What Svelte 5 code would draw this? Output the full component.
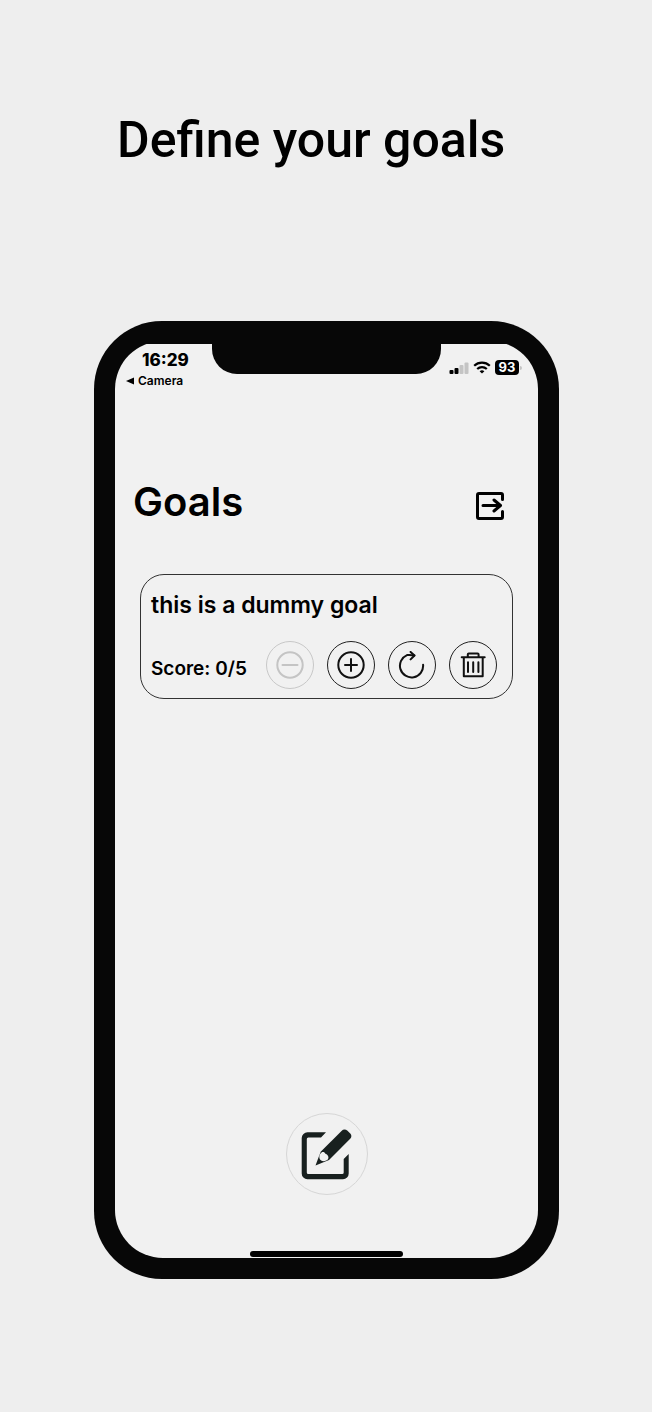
<script>
  const goals = $state([{ id: 1, title: 'this is a dummy goal', score: 0, target: 5 }]);

  function change(goal, step) {
    goal.score = Math.max(0, Math.min(goal.target, goal.score + step));
  }

  function remove(goal) {
    goals.splice(goals.indexOf(goal), 1);
  }
</script>

<main>
  <h1>Define your goals</h1>

  <section class="phone">
    <div class="screen">
      <div class="notch"></div>
      <header class="status">
        <div class="left">
          <time>16:29</time>
          <a href="#camera">
            <svg width="8" height="8" viewBox="0 0 8 8"><path d="M8 0.5v7L0 4z" /></svg>
            <span>Camera</span>
          </a>
        </div>
        <div class="right">
          <svg width="20" height="12" viewBox="0 0 20 12">
            <rect x="0.5" y="8" width="4" height="4" rx="1" />
            <rect x="5.5" y="6" width="4" height="6" rx="1" />
            <rect class="dim" x="10.5" y="3" width="4" height="9" rx="1" />
            <rect class="dim" x="15.5" y="0.5" width="4" height="11.5" rx="1" />
          </svg>
          <svg width="18" height="13" viewBox="0 0 18 13" fill="none" stroke="#000" stroke-width="2.2">
            <path d="M1.2 4.8a11.2 11.2 0 0 1 15.6 0M4.2 8a7 7 0 0 1 9.6 0" />
            <path d="M9 12.4 6.6 10.2a3.6 3.6 0 0 1 4.8 0z" fill="#000" stroke="none" />
          </svg>
          <span class="battery">93</span>
          <span class="cap"></span>
        </div>
      </header>

      <div class="title">
        <h2>Goals</h2>
        <button class="plain" aria-label="Log out">
          <svg width="30" height="30" viewBox="0 0 30 30" fill="none" stroke="#000" stroke-width="3" stroke-linejoin="round" stroke-linecap="round">
            <path d="M27.5 8.500V4a1.500 1.500 0 0 0-1.500-1.500H4A1.500 1.500 0 0 0 2.500 4v22A1.500 1.500 0 0 0 4 27.500h22a1.500 1.500 0 0 0 1.500-1.500v-5.500" />
            <path d="M8 14.500h17M19 9l6.500 5.500L19 20" />
          </svg>
        </button>
      </div>

      <ul>
        {#each goals as goal (goal.id)}
          <li>
            <h3>{goal.title}</h3>
            <div class="row">
              <p>Score: {goal.score}/{goal.target}</p>
              <button class="round" aria-label="Decrease score" disabled={goal.score === 0} onclick={() => change(goal, -1)}>
                <svg width="28" height="28" viewBox="0 0 28 28">
                  <circle cx="14" cy="14" r="12.700" />
                  <path d="M6.500 14h15" />
                </svg>
              </button>
              <button class="round" aria-label="Increase score" onclick={() => change(goal, 1)}>
                <svg width="28" height="28" viewBox="0 0 28 28">
                  <circle cx="14" cy="14" r="12.700" />
                  <path d="M8 14h12M14 8v12" />
                </svg>
              </button>
              <button class="round" aria-label="Reset score" onclick={() => (goal.score = 0)}>
                <svg width="28" height="28" viewBox="0 0 28 28">
                  <path d="M25.100 13.800A11.600 11.600 0 1 1 9 4.100Q12 3.700 16.300 4.400" />
                  <path d="M12.600 0.900l3.900 3.600-3.900 3.900" />
                </svg>
              </button>
              <button class="round" aria-label="Delete goal" onclick={() => remove(goal)}>
                <svg width="28" height="28" viewBox="0 0 28 28">
                  <path d="M2.700 6.300h23M4.800 6.300V25.200h18.900V6.300M8.800 6V3.600a1 1 0 0 1 1-1h8.800a1 1 0 0 1 1 1V6" />
                  <path d="M9 11.300v9.700M14.200 11.300v9.700M19.400 11.300v9.700" />
                </svg>
              </button>
            </div>
          </li>
        {/each}
      </ul>

      <button class="compose" aria-label="New goal">
        <svg width="52" height="52" viewBox="0 0 52 52" fill="#18201f">
          <path d="M25 4.300H6.500A6 6 0 0 0 0.700 10v35.500A5.700 5.700 0 0 0 6.500 51.200h35.500a5.700 5.700 0 0 0 5.700-5.700V26l-5 5v13.500a1.500 1.500 0 0 1-1.500 1.500H7.300a1.500 1.500 0 0 1-1.500-1.500V11a1.500 1.500 0 0 1 1.500-1.500H20z" />
          <path d="M40.500 3a4.500 4.500 0 0 1 6-0.200l2.500 2.400a4.200 4.200 0 0 1 0.200 5.600L28 32 14.500 37.500 19.700 23.700z" />
          <path d="M20.600 24.400c1.500-.7 3.200-.2 3.800 1.300 1.700.5 2.700 1.800 3 3.400.2 1.600-.7 3-2.200 3.500-2.600 1-4.800.6-5.900-.9-1.600-2.300-1-5.800 1.300-7.300z" fill="#f1f1f1" />
        </svg>
      </button>
      <div class="home"></div>
    </div>
  </section>
</main>

<style>
  :global(body) {
    background: #eee;
  }
  main {
    padding: 110px 93px 133px 94px;
    font-family: Inter, sans-serif;
    color: #000;
  }
  h1, h2, h3, p, ul {
    margin: 0;
    padding: 0;
  }
  h1 {
    padding-left: 23px;
    font: 500 50px/60px Roboto, sans-serif;
    white-space: nowrap;
  }
  svg {
    display: block;
    flex: none;
  }
  button {
    display: flex;
    align-items: center;
    justify-content: center;
    margin: 0;
    padding: 0;
    background: none;
    color: inherit;
  }
  .phone {
    margin-top: 151px;
    padding: 20px 21px 21px;
    border-radius: 68px;
    background: #070707;
  }
  .screen {
    position: relative;
    display: flex;
    flex-direction: column;
    min-height: 917px;
    border-radius: 48px;
    background: linear-gradient(#070707 3px, #f1f1f1 3px);
  }
  .notch {
    position: absolute;
    top: 0;
    left: 23%;
    right: 23%;
    height: 33px;
    border-radius: 0 0 25px 25px;
    background: #070707;
  }
  .status {
    display: flex;
    justify-content: space-between;
    padding: 9px 16px 0 11px;
  }
  .left {
    display: flex;
    flex-direction: column;
    gap: 3px;
  }
  time {
    padding-left: 16px;
    font-size: 17px;
    font-weight: 800;
    line-height: 20px;
  }
  .left a {
    display: flex;
    align-items: center;
    gap: 4px;
    color: #000;
    font-size: 12px;
    font-weight: 600;
    line-height: 16px;
    text-decoration: none;
  }
  .right {
    display: flex;
    align-items: center;
    align-self: flex-start;
    padding-top: 10px;
  }
  .right svg {
    margin-right: 4px;
  }
  .dim {
    fill: #c4c4c4;
  }
  .battery {
    width: 24px;
    border-radius: 4px;
    background: #000;
    color: #fff;
    font-size: 13px;
    font-weight: 700;
    line-height: 15px;
    text-align: center;
  }
  .cap {
    width: 2px;
    height: 4px;
    margin-left: 1px;
    border-radius: 0 2px 2px 0;
    background: #c4c4c4;
  }
  .title {
    display: flex;
    align-items: center;
    justify-content: space-between;
    padding: 88px 33px 0 18px;
  }
  h2 {
    font-size: 40px;
    font-weight: 600;
    line-height: 50px;
  }
  .plain {
    border: 0;
    padding-top: 8px;
  }
  ul {
    padding: 47px 25px 0;
    list-style: none;
  }
  li {
    padding: 15px 15px 9px 10px;
    border: 1px solid #333;
    border-radius: 24px;
  }
  h3 {
    font-size: 23px;
    font-weight: 600;
    line-height: 30px;
  }
  .row {
    display: flex;
    align-items: center;
    gap: 13px;
    padding-top: 21px;
  }
  .row p {
    flex: 1;
    padding-top: 8px;
    font-size: 19px;
    font-weight: 600;
    line-height: 24px;
    white-space: nowrap;
  }
  .round {
    width: 48px;
    height: 48px;
    border: 1px solid #222;
    border-radius: 50%;
  }
  .round svg {
    fill: none;
    stroke: #111;
    stroke-width: 2;
    stroke-linecap: round;
    stroke-linejoin: round;
  }
  .round:disabled {
    border-color: #c8c8c8;
  }
  .round:disabled svg {
    stroke: #c4c4c4;
  }
  .compose {
    width: 82px;
    height: 82px;
    margin: auto auto 56px;
    border: 1px solid #d6d6d6;
    border-radius: 50%;
  }
  .home {
    width: 36%;
    height: 6px;
    margin: 0 auto 1px;
    border-radius: 3px;
    background: #000;
  }
</style>
